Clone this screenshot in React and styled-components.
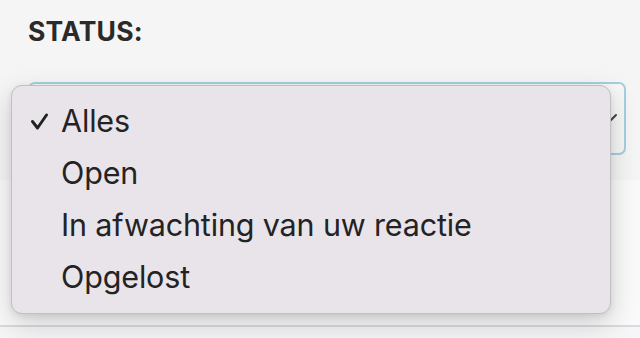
import React from "react";
import styled, { createGlobalStyle } from "styled-components";

const Global = createGlobalStyle`
  html, body { margin: 0; padding: 0; }
  body {
    background: #f6f6f6;
    font-family: Inter, "Noto Sans", sans-serif;
    color: #262626;
    overflow: hidden;
  }
`;

const Page = styled.div`
  width: 640px;
  height: 338px;
  display: flex;
  flex-direction: column;
  background: #f6f6f6;
`;

const FilterSection = styled.div`
  display: flex;
  flex-direction: column;
  gap: 31px;
  padding: 11px 14px 25px 28px;
  background: #f5f5f5;
`;

const Label = styled.div`
  font-size: 26.5px;
  font-weight: 700;
  letter-spacing: 0.2px;
  line-height: 40px;
  color: #2a2a2a;
`;

const SelectWrap = styled.div`
  position: relative;
`;

const SelectBox = styled.div`
  height: 73px;
  box-sizing: border-box;
  border: 2px solid #a3cfdf;
  border-radius: 7px;
  background: #f7f7f7;
  display: flex;
  align-items: center;
  justify-content: flex-end;
  padding-right: 6px;
`;

const Menu = styled.ul`
  position: absolute;
  left: -17px;
  top: 3px;
  width: 600px;
  height: 229px;
  box-sizing: border-box;
  margin: 0;
  padding: 8px 0 0 0;
  list-style: none;
  background: #e9e4ea;
  border: 1px solid #c2bfc3;
  border-radius: 11px;
  box-shadow: 0 10px 28px rgba(0, 0, 0, 0.18), 0 2px 6px rgba(0, 0, 0, 0.08);
`;

const Item = styled.li`
  display: flex;
  align-items: center;
  height: 52px;
  font-size: 30.5px;
  color: #232323;
  letter-spacing: -0.15px;
`;

const CheckSlot = styled.span`
  width: 49px;
  display: flex;
  justify-content: flex-end;
  box-sizing: border-box;
`;

const ListArea = styled.div`
  height: 145px;
  background: #fafafa;
  border-bottom: 2px solid #d7dce2;
`;

const Check = () => (
  <svg width="30" height="20" viewBox="0 0 30 20">
    <path d="M1.5 11.5 L6.5 18 L15.5 5" fill="none" stroke="#222" strokeWidth="2.9" strokeLinecap="round" strokeLinejoin="round" />
  </svg>
);

const Chevron = () => (
  <svg width="20" height="12" viewBox="0 0 20 12">
    <path d="M2 2 L10 10 L18 2" fill="none" stroke="#444" strokeWidth="2" strokeLinecap="round" strokeLinejoin="round" />
  </svg>
);

const options = ["Alles", "Open", "In afwachting van uw reactie", "Opgelost"];

export default function App() {
  return (
    <>
      <Global />
      <Page>
        <FilterSection>
          <Label>STATUS:</Label>
          <SelectWrap>
            <SelectBox>
              <Chevron />
            </SelectBox>
            <Menu>
              {options.map((o, i) => (
                <Item key={o}>
                  <CheckSlot>{i === 0 && <Check />}</CheckSlot>
                  {o}
                </Item>
              ))}
            </Menu>
          </SelectWrap>
        </FilterSection>
        <ListArea />
      </Page>
    </>
  );
}
